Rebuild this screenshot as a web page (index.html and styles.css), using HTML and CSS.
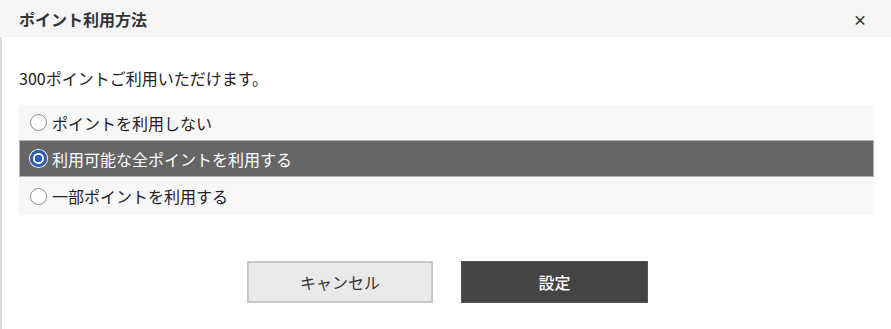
FILE: index.html
```html
<!DOCTYPE html>
<html lang="ja">
<head>
<meta charset="utf-8">
<link rel="stylesheet" href="styles.css">
</head>
<body>
<div class="dialog">
  <div class="header">
    <span class="title">ポイント利用方法</span>
    <span class="close">×</span>
  </div>
  <div class="content">
    <p class="lead">300ポイントご利用いただけます。</p>
    <ul class="options">
      <li class="option"><span class="radio"></span><span>ポイントを利用しない</span></li>
      <li class="option selected"><span class="radio"></span><span>利用可能な全ポイントを利用する</span></li>
      <li class="option"><span class="radio"></span><span>一部ポイントを利用する</span></li>
    </ul>
    <div class="actions">
      <button class="btn cancel">キャンセル</button>
      <button class="btn ok">設定</button>
    </div>
  </div>
</div>
</body>
</html>
```
FILE: styles.css
```css
html, body {
  margin: 0;
  padding: 0;
  background: #fff;
}
body {
  font-family: "Noto Sans CJK JP", "Noto Sans", sans-serif;
  color: #222;
}
.dialog {
  width: 891px;
  height: 329px;
  box-sizing: border-box;
}
.header {
  height: 37px;
  background: #f5f5f5;
  display: flex;
  align-items: center;
  justify-content: space-between;
  padding: 0 24px 0 19px;
  box-sizing: border-box;
}
.title {
  font-size: 16px;
  font-weight: 700;
  color: #333;
}
.close {
  font-size: 14px;
  font-weight: 700;
  color: #333;
  line-height: 1;
}
.content {
  border-left: 2px solid #d8d8d8;
  height: 292px;
  box-sizing: border-box;
  padding: 29px 15px 0 17px;
}
.lead {
  margin: 0;
  font-size: 16px;
  line-height: 24px;
  color: #222;
}
.options {
  list-style: none;
  margin: 15px 0 0 0;
  padding: 0;
  background: #f7f7f7;
  width: 855px;
}
.option {
  height: 36px;
  display: flex;
  align-items: center;
  padding-left: 11px;
  font-size: 16px;
  color: #222;
  box-sizing: border-box;
}
.option:first-child { height: 35px; }
.option:last-child { height: 38px; }
.option.selected {
  background: #666;
  color: #fff;
  border: 1px solid #b0b0b0;
  padding-left: 10px;
  height: 37px;
}
.radio {
  width: 15px;
  height: 15px;
  border: 1px solid #8a8a8a;
  border-radius: 50%;
  background: #fff;
  margin-right: 5px;
  flex: none;
}
.selected .radio {
  width: 11px;
  height: 11px;
  border: 3px solid #2a5fb4;
  box-shadow: 0 0 0 1px #fff;
  background: radial-gradient(circle, #2a5fb4 0 3.5px, #fff 4px);
}
.actions {
  display: flex;
  gap: 28px;
  padding-left: 228px;
  margin-top: 46px;
}
.btn {
  width: 186px;
  height: 42px;
  font-family: "Noto Sans CJK JP", "Noto Sans", sans-serif;
  font-size: 16px;
  cursor: pointer;
  box-sizing: border-box;
}
.cancel {
  background: #e9e9e9;
  border: 2px solid #c9c9c9;
  color: #333;
}
.ok {
  background: #444;
  border: 1px solid #555;
  color: #fff;
  font-weight: 500;
  width: 187px;
}
```
